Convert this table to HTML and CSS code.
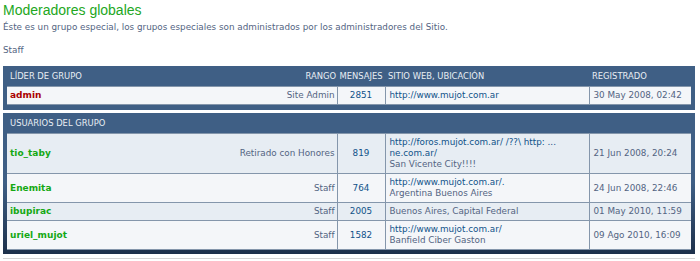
FILE: index.html
```html
<!DOCTYPE html>
<html lang="es">
<head>
<meta charset="utf-8">
<title>Moderadores globales</title>
<link rel="stylesheet" href="styles.css">
</head>
<body>
<div class="page">
  <h2 class="title">Moderadores globales</h2>
  <p class="desc">Éste es un grupo especial, los grupos especiales son administrados por los administradores del Sitio.</p>
  <p class="desc staff">Staff</p>

  <div class="panel first">
    <table class="tbl">
      <colgroup><col class="c1"><col class="c2"><col class="c3"><col class="c4"></colgroup>
      <thead>
        <tr>
          <th class="th-name"><span class="th-rank">Rango</span>Líder de grupo</th>
          <th class="th-posts">Mensajes</th>
          <th>Sitio web, ubicación</th>
          <th>Registrado</th>
        </tr>
      </thead>
      <tbody>
        <tr class="bg1">
          <td class="name"><span class="rank">Site Admin</span><a class="user admin">admin</a></td>
          <td class="posts"><a>2851</a></td>
          <td class="info"><a>http://www.mujot.com.ar</a></td>
          <td class="date">30 May 2008, 02:42</td>
        </tr>
      </tbody>
    </table>
  </div>

  <div class="panel">
    <table class="tbl">
      <colgroup><col class="c1"><col class="c2"><col class="c3"><col class="c4"></colgroup>
      <thead>
        <tr><th colspan="4">Usuarios del grupo</th></tr>
      </thead>
      <tbody>
        <tr class="bg2">
          <td class="name"><span class="rank">Retirado con Honores</span><a class="user mod">tio_taby</a></td>
          <td class="posts"><a>819</a></td>
          <td class="info"><a>http://foros.mujot.com.ar/ /??\ http: ...<br>ne.com.ar/</a><br>San Vicente City!!!!</td>
          <td class="date">21 Jun 2008, 20:24</td>
        </tr>
        <tr class="bg1">
          <td class="name"><span class="rank">Staff</span><a class="user mod">Enemita</a></td>
          <td class="posts"><a>764</a></td>
          <td class="info"><a>http://www.mujot.com.ar/.</a><br>Argentina Buenos Aires</td>
          <td class="date">24 Jun 2008, 22:46</td>
        </tr>
        <tr class="bg2">
          <td class="name"><span class="rank">Staff</span><a class="user mod">ibupirac</a></td>
          <td class="posts"><a>2005</a></td>
          <td class="info">Buenos Aires, Capital Federal</td>
          <td class="date">01 May 2010, 11:59</td>
        </tr>
        <tr class="bg1">
          <td class="name"><span class="rank">Staff</span><a class="user mod">uriel_mujot</a></td>
          <td class="posts"><a>1582</a></td>
          <td class="info"><a>http://www.mujot.com.ar/</a><br>Banfield Ciber Gaston</td>
          <td class="date">09 Ago 2010, 16:09</td>
        </tr>
      </tbody>
    </table>
  </div>
  <hr class="sep">
</div>
</body>
</html>
```

FILE: styles.css
```css
html, body {
  margin: 0;
  padding: 0;
  background: #ffffff;
}

.page {
  padding: 0 5px 0 3px;
  font-family: "DejaVu Sans", Verdana, sans-serif;
  font-size: 8.8px;
  color: #536482;
}

.title {
  margin: 0;
  padding-top: 1px;
  font-family: "Liberation Sans", Arial, sans-serif;
  font-weight: normal;
  font-size: 14px;
  line-height: 18px;
  color: #22a722;
}

.desc {
  margin: 2px 0 0 0;
  line-height: 12px;
}

.desc.staff {
  margin-top: 11px;
  margin-bottom: 10px;
}

.panel {
  background: linear-gradient(#3f5f85 0, #3f5f85 70px, #1d304a 100%);
  padding: 0 4px 4px 4px;
  margin-bottom: 3px;
}

.panel.first {
  padding-bottom: 5px;
}

.tbl {
  width: 100%;
  border-collapse: collapse;
  table-layout: fixed;
}

.c1 { width: 330px; }
.c2 { width: 48px; }
.c3 { width: 204px; }
.c4 { width: 102px; }

.tbl th {
  color: #e8eef4;
  font-weight: normal;
  text-transform: uppercase;
  font-size: 8.4px;
  text-align: left;
  height: 20px;
  padding: 0 3px;
  white-space: nowrap;
  vertical-align: middle;
}

.tbl th.th-name { padding-left: 3px; padding-right: 1px; }
.tbl th.th-posts { text-align: center; padding: 0; }
.th-rank { float: right; }

.tbl td {
  border-right: 1px solid #8496ab;
  border-bottom: 1px solid #8496ab;
  border-top: 1px solid #8496ab;
  padding: 3px 4px 3px 4px;
  line-height: 11px;
  vertical-align: middle;
  color: #536482;
}

.tbl td:last-child { border-right: none; }

.bg1 td { background: #f4f6f9; }
.bg2 td { background: #e7edf3; }

.tbl td.name { padding-left: 3px; padding-right: 2px; font-size: 9px; }
.rank { float: right; font-size: 8.8px; }

.user {
  font-weight: bold;
}
.user.admin { color: #aa0000; }
.user.mod { color: #14a814; }

.posts { text-align: center; }
.posts a, .info a { color: #105289; }

.date { padding-left: 4px; }

.sep {
  margin: 4px 0 0 0;
  border: none;
  border-top: 1px solid #d4d4d4;
  height: 0;
}
```
